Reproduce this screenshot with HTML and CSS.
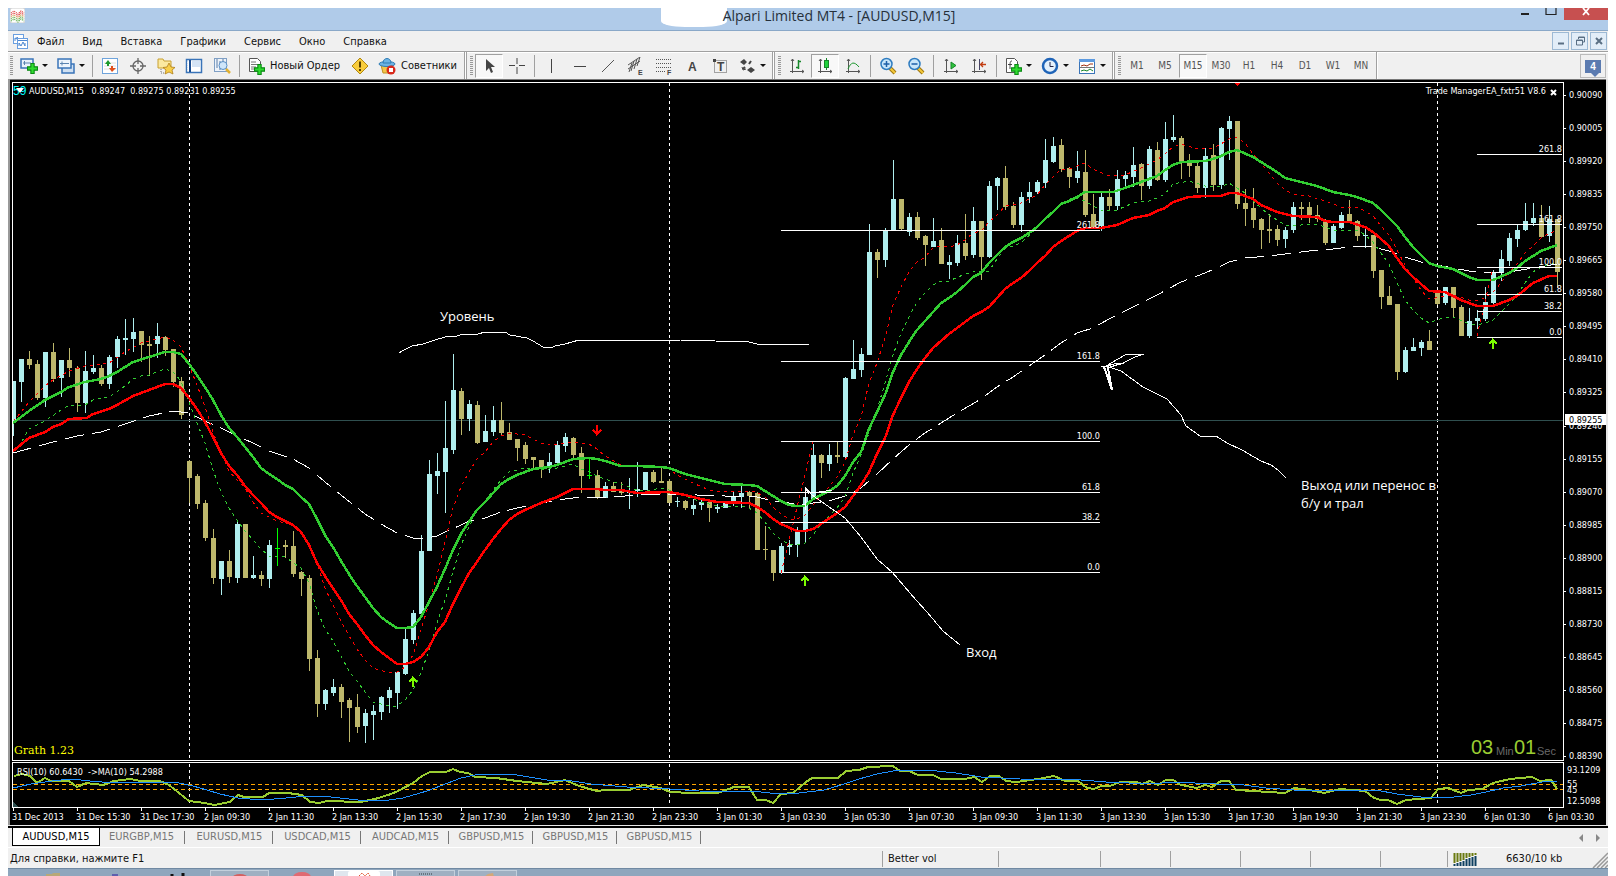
FILE: index.html
```html
<!DOCTYPE html>
<html lang="ru">
<head>
<meta charset="utf-8">
<title>Alpari Limited MT4 - [AUDUSD,M15]</title>
<link rel="stylesheet" href="styles.css">
</head>
<body>
<svg class="defs" aria-hidden="true">
  <symbol id="plus" viewBox="0 0 10 10"><path d="M3.500.5h3v3h3v3h-3v3h-3v-3h-3v-3h3z" fill="#2fdc2f" stroke="#0a8a14"/></symbol>
  <symbol id="axes" viewBox="0 0 18 18"><path d="M4.500 2v14M2 14.500h14M3 4l1.500-2L6 4M14 13l2 1.500-2 1.500" fill="none" stroke="#555"/></symbol>
  <symbol id="lens" viewBox="0 0 18 18"><path d="M11 11l5 5" stroke="#a07810" stroke-width="4"/><path d="M11 11l5 5" stroke="#f4c93c" stroke-width="2"/><circle cx="7.500" cy="7" r="5.500" fill="#c8e6fa" stroke="#2e7cc0" stroke-width="1.500"/></symbol>
</svg>

<header class="titlebar">
  <svg class="app-icon" viewBox="0 0 15 15" aria-hidden="true"><rect width="15" height="15" rx="2" fill="#fff" stroke="#ccc"/><g fill="none" stroke-dasharray="1 1" stroke-width="1.300"><path d="M1 5l3-2 4 3 3-3 3 2M1 7l3-2 4 3 3-3 3 2" stroke="#e04040"/><path d="M1 9l3-2 4 3 3-3 3 2" stroke="#d0a050"/><path d="M1 11l3-2 4 3 3-3 3 2M1 13l3-2 4 3 3-3 3 2" stroke="#5fae50"/></g></svg>
  <div class="caption"><span class="smudge"></span><h1>Alpari Limited MT4 - [AUDUSD,M15]</h1></div>
  <div class="window-buttons">
    <button class="win" aria-label="Свернуть"><svg viewBox="0 0 12 12"><path d="M2 6h8" stroke="#222" stroke-width="2"/></svg></button>
    <button class="win" aria-label="Развернуть"><svg viewBox="0 0 12 12"><path d="M1 0v6.500h10V0" fill="none" stroke="#222" stroke-width="1.200"/></svg></button>
    <button class="win close" aria-label="Закрыть"><svg viewBox="0 0 12 12"><path d="M3 0l6 7M9 0L3 7" stroke="#fff" stroke-width="1.800"/></svg></button>
  </div>
</header>

<nav class="menubar">
  <svg class="doc-icon" viewBox="0 0 15 15" aria-hidden="true"><rect x=".5" y=".5" width="10" height="9" fill="#fff" stroke="#6a9fe0"/><path d="M2 7V4l2 1V3l2 3" fill="none" stroke="#4a86d0"/><rect x="4.500" y="4.500" width="10" height="10" fill="#fff" stroke="#6a9fe0"/><path d="M5 6.500h9M6 12V9l2 3 2-4 2 4V9" fill="none" stroke="#4a86d0"/></svg>
  <button>Файл</button><button>Вид</button><button>Вставка</button><button>Графики</button><button>Сервис</button><button>Окно</button><button>Справка</button>
  <div class="mdi">
    <button aria-label="Свернуть окно"><svg viewBox="0 0 12 12"><path d="M3 8.500h6" stroke="#5a6f84" stroke-width="2"/></svg></button>
    <button aria-label="Восстановить окно"><svg viewBox="0 0 12 12"><path d="M4.500 4V2h6v5h-2M2.500 5h6v5h-6zM2 5.500h7M4 2.500h7" fill="none" stroke="#5a6f84"/></svg></button>
    <button aria-label="Закрыть окно"><svg viewBox="0 0 12 12"><path d="M3 3l6 6M9 3L3 9" stroke="#5a6f84" stroke-width="2"/></svg></button>
  </div>
</nav>

<div class="toolbar">
  <div class="group">
    <i class="grip"></i>
    <button class="tool drop" aria-label="Новый график"><svg viewBox="0 0 18 18"><rect x="1" y="2" width="12" height="9" fill="#e8f2fc" stroke="#3a74b8" stroke-width="1.500"/><path d="M3 6h8M4.500 4v4" stroke="#5a84b0" fill="none"/><use href="#plus" x="7" y="6" width="11" height="11"/></svg><b></b></button>
    <button class="tool drop" aria-label="Профили"><svg viewBox="0 0 18 18"><rect x="5" y="7" width="12" height="9" fill="#cfe0f2" stroke="#3a74b8" stroke-width="1.500"/><rect x="1" y="2" width="13" height="9" fill="#eef5fc" stroke="#3a74b8" stroke-width="1.500"/><path d="M3 6.500h9M5 4.500v4" stroke="#5a84b0" fill="none"/></svg><b></b></button>
    <i class="sep"></i>
    <button class="tool" aria-label="Обзор рынка"><svg viewBox="0 0 18 18"><rect x="1.500" y="1.500" width="15" height="15" fill="#fff" stroke="#6fa4dc"/><path d="M3 6h12M3 9h12M3 12h12" stroke="#e0e0e0"/><path d="M7 3l3 4H8v2H6V7H4z" fill="#1c9a2c"/><path d="M11 15l-3-4h2V9h2v2h3z" fill="#e0501c"/></svg></button>
    <button class="tool" aria-label="Окно данных"><svg viewBox="0 0 18 18"><circle cx="9" cy="9" r="5" fill="none" stroke="#666" stroke-width="1.300"/><path d="M9 1v6M9 11v6M1 9h6M11 9h6" stroke="#666" stroke-width="1.300"/></svg></button>
    <button class="tool" aria-label="Навигатор"><svg viewBox="0 0 18 18"><path d="M1 11V2h5l1 2h7v7z" fill="#fbe9a0" stroke="#c8a030"/><path d="M4 12v4h4" stroke="#777" stroke-dasharray="1 1" fill="none"/><path d="M12 6l2 4 4 .5-3 2.500 1 4-4-2-4 2 1-4-3-2.500 4-.5z" fill="#f8cf4a" stroke="#b07f18" stroke-width=".8"/></svg></button>
    <button class="tool" aria-label="Терминал"><svg viewBox="0 0 18 18"><rect x="1.500" y="2.500" width="15" height="13" fill="#fff" stroke="#3a74b8" stroke-width="1.500"/><path d="M5 3v12" stroke="#1d4f92" stroke-width="2"/><path d="M7 5h8M7 7h8M7 9h8" stroke="#a9c8ec"/><path d="M3 5v9" stroke="#fff" stroke-dasharray="1 1"/></svg></button>
    <button class="tool" aria-label="Тестер стратегий"><svg viewBox="0 0 18 18"><rect x="1.500" y="1.500" width="12" height="13" fill="#eef3fa" stroke="#7f9fc4"/><path d="M4 2v9M7 4v9M10 2v6" stroke="#5a7ea8"/><circle cx="10" cy="8.500" r="4" fill="#cfe6fa" stroke="#5a8fc4"/><path d="M13 12l4 4" stroke="#e0b030" stroke-width="2.500"/></svg></button>
    <i class="sep"></i>
    <button class="labelled"><svg viewBox="0 0 18 18"><path d="M2.500 1.500h8l3 3v10h-11z" fill="#fff" stroke="#555"/><path d="M4 5h5M4 7.500h7M4 10h5M4 12h3" stroke="#777"/><use href="#plus" x="7" y="7" width="11" height="11"/></svg>Новый Ордер</button>
    <button class="tool" aria-label="MetaEditor"><svg viewBox="0 0 18 18"><path d="M9 1l8 8-8 8-8-8z" fill="#f8cc3c" stroke="#b08812"/><path d="M9 4.500v6M9 12v2" stroke="#5a4200" stroke-width="2"/></svg></button>
    <button class="labelled"><svg viewBox="0 0 18 18"><path d="M3 8l2 8h7l3-8z" fill="#f3c64a" stroke="#c09020"/><ellipse cx="9" cy="7" rx="8" ry="2.500" fill="#6db4e4" stroke="#2f7cb4"/><path d="M5 6c0-6 8-6 8 0z" fill="#6db4e4" stroke="#2f7cb4"/><circle cx="13" cy="13" r="4.500" fill="#d82a1c"/><rect x="11" y="11" width="4" height="4" fill="#fff"/></svg>Советники</button>
  </div>
  <div class="group">
    <i class="grip"></i>
    <button class="tool pressed" aria-label="Курсор"><svg viewBox="0 0 18 18"><path d="M6 2v12l3-3 2 5 2-1-2-5h4z" fill="#444"/></svg></button>
    <button class="tool" aria-label="Перекрестие"><svg viewBox="0 0 18 18"><path d="M9 1v6M9 10v7M1 8.500h6M11 8.500h6" stroke="#444"/></svg></button>
    <i class="sep"></i>
    <button class="tool" aria-label="Вертикальная линия"><svg viewBox="0 0 18 18"><path d="M8.500 2v14" stroke="#444"/></svg></button>
    <button class="tool" aria-label="Горизонтальная линия"><svg viewBox="0 0 18 18"><path d="M3 9.500h12" stroke="#444"/></svg></button>
    <button class="tool" aria-label="Трендовая линия"><svg viewBox="0 0 18 18"><path d="M3 15L15 3" stroke="#555"/></svg></button>
    <button class="tool" aria-label="Канал"><svg viewBox="0 0 18 18"><path d="M1 12L13 4M1 8l12-8M4 14l3-10M7 12l3-10M10 9l3-9M2 15l3-9" stroke="#555"/><text x="11" y="18" class="glyph">E</text></svg></button>
    <button class="tool" aria-label="Фибоначчи"><svg viewBox="0 0 18 18"><path d="M1 2.500h15M1 6.500h15M1 10.500h15M1 14.500h9" stroke="#555" stroke-dasharray="1 1"/><text x="12" y="18" class="glyph">F</text></svg></button>
    <button class="tool" aria-label="Текст"><svg viewBox="0 0 18 18"><text x="5" y="14" class="glyph big">A</text></svg></button>
    <button class="tool" aria-label="Метка"><svg viewBox="0 0 18 18"><rect x="3.500" y="3.500" width="12" height="12" fill="none" stroke="#555" stroke-dasharray="1 1"/><path d="M2 2h3v3H2z" fill="#444"/><text x="6" y="14" class="glyph big">T</text></svg></button>
    <button class="tool drop" aria-label="Стрелки"><svg viewBox="0 0 18 18"><path d="M2 5l4-3 3 3-3 3zM9 13l4-3 4 3-4 3z" fill="#444"/><path d="M5 12l2-2M11 7l2-3" stroke="#444" stroke-width="2"/><path d="M4 10l1 3 3-1" fill="none" stroke="#444"/></svg><b></b></button>
  </div>
  <div class="group">
    <i class="grip"></i>
    <button class="tool" aria-label="Бары"><svg viewBox="0 0 18 18"><use href="#axes"/><path d="M10.500 3v9M8 10.500h2M11 4.500h2" stroke="#17862a" stroke-width="1.500"/></svg></button>
    <button class="tool pressed" aria-label="Свечи"><svg viewBox="0 0 18 18"><use href="#axes"/><path d="M10.500 1v12" stroke="#17862a"/><rect x="8.500" y="3.500" width="4" height="7" fill="#1fd23a" stroke="#17862a"/></svg></button>
    <button class="tool" aria-label="Линия"><svg viewBox="0 0 18 18"><use href="#axes"/><path d="M4 12c3-7 6-8 11-2" fill="none" stroke="#17962a"/></svg></button>
    <i class="sep"></i>
    <button class="tool" aria-label="Увеличить"><svg viewBox="0 0 18 18"><use href="#lens"/><path d="M4.500 7h6M7.500 4v6" stroke="#1d5fa8" stroke-width="1.500"/></svg></button>
    <button class="tool" aria-label="Уменьшить"><svg viewBox="0 0 18 18"><use href="#lens"/><path d="M4.500 7h6" stroke="#1d5fa8" stroke-width="1.500"/></svg></button>
    <i class="sep"></i>
    <button class="tool" aria-label="Автопрокрутка"><svg viewBox="0 0 18 18"><use href="#axes"/><path d="M9 5l5 3.500L9 12z" fill="#2fc23c" stroke="#17862a"/></svg></button>
    <button class="tool" aria-label="Сдвиг графика"><svg viewBox="0 0 18 18"><use href="#axes"/><path d="M9.500 2v11" stroke="#446"/><path d="M16 7.500h-5M13 5l-2.500 2.500L13 10" fill="none" stroke="#c23c10" stroke-width="1.300"/></svg></button>
    <i class="sep"></i>
    <button class="tool drop" aria-label="Индикаторы"><svg viewBox="0 0 18 18"><path d="M2.500 1.500h8l3 3v11h-11z" fill="#fff" stroke="#555"/><path d="M8 4c-2 0-2 1-2 8M4 7.500h4" fill="none" stroke="#444"/><use href="#plus" x="7" y="7" width="11" height="11"/></svg><b></b></button>
    <button class="tool drop" aria-label="Периоды"><svg viewBox="0 0 18 18"><circle cx="9" cy="9" r="7" fill="#e4f1fc" stroke="#1f64b8" stroke-width="2.500"/><path d="M9 5v4.500h3.500" fill="none" stroke="#224"/></svg><b></b></button>
    <button class="tool drop" aria-label="Шаблоны"><svg viewBox="0 0 18 18"><rect x="1.500" y="2.500" width="15" height="14" fill="#fff" stroke="#3a74b8"/><rect x="1" y="2" width="16" height="3" fill="#5c9ae0"/><path d="M3 9l3-1 3 1 3-2h3" fill="none" stroke="#a03010"/><path d="M2 10.500h14" stroke="#777"/><path d="M3 14l3-1 3 1 3-2 3 2" fill="none" stroke="#17862a"/></svg><b></b></button>
  </div>
  <div class="group frames">
    <i class="grip"></i>
    <button class="tool">M1</button><button class="tool">M5</button><button class="tool pressed">M15</button><button class="tool">M30</button><button class="tool">H1</button><button class="tool">H4</button><button class="tool">D1</button><button class="tool">W1</button><button class="tool">MN</button>
  </div>
  <button class="messages" aria-label="Сообщения: 4"><span>4</span></button>
</div>

<main class="chart-window">
  <svg id="chart" class="chart" viewBox="8 79 1600 747" role="img" aria-label="AUDUSD,M15">
    <rect x="8" y="79" width="1600" height="747" fill="#e6e6e6"/>
    <rect x="8" y="79" width="1598" height="2" fill="#777"/>
    <rect x="8" y="79" width="2" height="746" fill="#999"/>
    <rect x="10" y="80" width="1596" height="745" fill="#000"/>
    <g id="plot" shape-rendering="crispEdges"></g>
    <g id="labels"></g>
  </svg>
</main>

<div class="tabs">
  <button class="tab active">AUDUSD,M15</button><button class="tab">EURGBP,M15</button><button class="tab">EURUSD,M15</button><button class="tab">USDCAD,M15</button><button class="tab">AUDCAD,M15</button><button class="tab">GBPUSD,M15</button><button class="tab">GBPUSD,M15</button><button class="tab">GBPUSD,M15</button>
  <div class="scrollers"><button class="arrow left" aria-label="Влево"></button><button class="arrow right" aria-label="Вправо"></button></div>
</div>

<footer class="statusbar">
  <span class="help">Для справки, нажмите F1</span>
  <span class="cell profile">Better vol</span>
  <span class="cell medium"></span><span class="cell"></span><span class="cell"></span><span class="cell"></span><span class="cell"></span><span class="cell narrow"></span>
  <span class="cell traffic"><svg viewBox="0 0 24 13" aria-hidden="true"><path d="M1.500 0v10M4.500 0v9M7.500 0v8M10.500 0v7M13.500 0v5M16.500 0v4M19.500 0v3M22.500 0v2" stroke="#6a7a10" stroke-width="2"/><path d="M1.500 11v2M4.500 10v3M7.500 9v4M10.500 8v5M13.500 6v7M16.500 5v8M19.500 4v9M22.500 3v10" stroke="#0e4060" stroke-width="2"/></svg>6630/10 kb</span>
  <svg class="corner" viewBox="0 0 16 16" aria-hidden="true"><path d="M1 16L16 1M5 16L16 5M9 16l7-7M13 16l3-3" stroke="#999" stroke-width="1.500"/></svg>
</footer>

<div class="taskbar">
  <span class="task"><svg viewBox="0 0 20 6"><path d="M2 6V4h6l1-1h7v3z" fill="#b8a878"/></svg></span>
  <span class="task"><svg viewBox="0 0 20 6"><path d="M6 4h6v2H6z" fill="#5f5fae"/></svg></span>
  <span class="task"><svg viewBox="0 0 20 6"><path d="M4 4v2M15 3v3" stroke="#111" stroke-width="3"/></svg></span>
  <span class="task open"><svg viewBox="0 0 20 6"><ellipse cx="10" cy="7" rx="8" ry="4" fill="#d45f5f"/></svg></span>
  <span class="task"><svg viewBox="0 0 20 6"><ellipse cx="10" cy="7" rx="9" ry="5" fill="#e06a72"/></svg></span>
  <span class="task open front"><svg viewBox="0 0 32 6"><rect width="32" height="8" rx="2" fill="#fff"/><path d="M11 5l3-3 3 3 3-3 2 3" fill="none" stroke="#e0502c" stroke-dasharray="2 1"/></svg></span>
  <span class="task open"><svg viewBox="0 0 20 6"><path d="M3 3h14" stroke="#66757f" stroke-width="2" stroke-dasharray="1 1"/></svg></span>
  <span class="task open"><svg viewBox="0 0 20 6"><path d="M6 6l4-3 5-1 1 4z" fill="#d4a878"/></svg></span>
</div>
<script src="chart.js"></script>
</body>
</html>
```

FILE: styles.css
```css
* { box-sizing: border-box; }
body {
  margin: 0;
  padding: 8px 8px 0;
  background: #fff;
  color: #111;
  font: 11px/14px "DejaVu Sans Condensed", "DejaVu Sans", sans-serif;
}
button {
  margin: 0;
  padding: 0;
  border: 0;
  background: none;
  color: inherit;
  font: inherit;
}
svg { display: block; }
.defs { position: absolute; width: 0; height: 0; }

.titlebar {
  display: grid;
  grid-template-columns: 1fr auto 1fr;
  height: 23px;
  background: #b0cbe9;
  border-bottom: 1px solid #8aa8c8;
}
.app-icon { width: 15px; height: 15px; margin-left: 2px; }
.caption { display: flex; }
.smudge {
  width: 66px;
  height: 19px;
  margin-right: -4px;
  background: #fff;
  border-radius: 0 0 24px 24px / 0 0 6px 6px;
}
.caption h1 {
  margin: 0;
  color: #26303a;
  font: 14px/16px "Open Sans", "Noto Sans", sans-serif;
}
.window-buttons { display: flex; justify-content: flex-end; align-items: flex-start; }
.win { display: flex; justify-content: center; width: 26px; height: 12px; }
.win svg { width: 12px; height: 12px; }
.win.close { width: 44px; background: #c75050; }

.menubar {
  display: flex;
  align-items: center;
  height: 20px;
  padding-left: 5px;
  background: #f0f0f0;
}
.doc-icon { width: 15px; height: 15px; }
.menubar > button { padding: 1px 9px 0; }
.mdi { display: flex; gap: 2px; margin-left: auto; padding-right: 1px; }
.mdi button {
  display: grid;
  place-items: center;
  width: 17px;
  height: 18px;
  background: #e2edf8;
  border: 1px solid #9db9d4;
}
.mdi svg { width: 12px; height: 12px; }

.toolbar {
  display: flex;
  height: 28px;
  background: #f0f0f0;
  border-top: 1px solid #a0a0a0;
  box-shadow: inset 0 1px #fff;
}
.group {
  display: flex;
  align-items: center;
  padding: 0 1px 0 2px;
  border-right: 1px solid #a0a0a0;
  box-shadow: 1px 0 #fff, 2px 0 #a0a0a0;
  margin-right: 3px;
}
.group.frames { box-shadow: 1px 0 #fff; }
.grip {
  width: 3px;
  height: 20px;
  margin-right: 2px;
  background: repeating-linear-gradient(#999 0 1px, #f0f0f0 1px 2px);
}
.sep { width: 1px; height: 22px; margin: 0 3px; background: #a0a0a0; }
.tool {
  display: flex;
  align-items: center;
  justify-content: center;
  width: 28px;
  height: 24px;
}
.tool svg, .labelled svg { width: 18px; height: 18px; }
.tool.drop { width: 37px; gap: 4px; }
.tool b {
  border: 3px solid transparent;
  border-top-color: #111;
  border-bottom: 0;
}
.tool.pressed {
  background: #f8f8f8;
  border: 1px solid #fff;
  border-top-color: #a0a0a0;
  border-left-color: #a0a0a0;
}
.labelled { display: flex; align-items: center; gap: 5px; padding: 0 6px 0 4px; }
.frames .tool { color: #555; font-size: 10px; }
.glyph { fill: #444; font: bold 7px "Liberation Sans", sans-serif; }
.glyph.big { font-size: 12px; }
.messages {
  display: grid;
  place-items: center;
  width: 26px;
  height: 24px;
  margin: 2px 2px 0 auto;
  border: 1px solid #bbb;
}
.messages span {
  position: relative;
  width: 16px;
  height: 13px;
  background: #5b7bb0;
  color: #fff;
  font: bold 10px/13px "Liberation Sans", sans-serif;
}
.messages span::after {
  content: "";
  position: absolute;
  top: 13px;
  left: 6px;
  border: 4px solid transparent;
  border-top-color: #5b7bb0;
  border-bottom: 0;
}

.chart { width: 100%; height: auto; }
.price, .time { fill: #fff; font-size: 9px; }
.price.end { text-anchor: end; }
.price.dark { fill: #000; }
.note { fill: #fff; font: 13px "Open Sans", "Noto Sans", sans-serif; }
.signature { fill: #ff0; font: 11px "DejaVu Serif", serif; }
.clock { fill: #9acd32; font: 20px "Liberation Sans", sans-serif; }
.unit { fill: #696969; font: 11px "Liberation Sans", sans-serif; }
.cyan { fill: #0ff; font: 12px "Liberation Sans", sans-serif; }

.tabs {
  display: flex;
  height: 22px;
  padding-left: 4px;
  background: #f0f0f0;
  border-top: 2px solid #000;
  border-bottom: 1px solid #fff;
}
.tab {
  position: relative;
  width: 88px;
  height: 18px;
  padding-right: 5px;
  color: #777;
}
.tab:nth-child(n+6) { width: 84px; }
.tab:not(.active)::after {
  content: "";
  position: absolute;
  top: 3px;
  right: 3px;
  width: 1px;
  height: 13px;
  background: #777;
}
.tab.active {
  padding: 0;
  background: #fff;
  color: #000;
  border: solid #000;
  border-width: 0 1px 1px;
}
.scrollers { display: flex; align-items: center; gap: 13px; margin: 0 8px 0 auto; }
.arrow { border: 4px solid transparent; }
.arrow.left { border-right-color: #888; border-left: 0; }
.arrow.right { border-left-color: #888; border-right: 0; }

.statusbar {
  display: flex;
  align-items: center;
  height: 20px;
  padding-top: 2px;
  background: #f0f0f0;
}
.help { flex: 1; padding-left: 2px; }
.cell { width: 70px; height: 16px; border-left: 1px solid #a0a0a0; }
.profile { width: 116px; padding: 1px 5px; }
.medium { width: 102px; }
.narrow { width: 67px; }
.traffic { display: flex; align-items: center; gap: 29px; width: 145px; padding-left: 5px; }
.traffic svg { width: 24px; height: 13px; }
.corner { width: 16px; height: 16px; align-self: flex-end; }

.taskbar {
  display: flex;
  gap: 3px;
  height: 8px;
  padding: 1px 0 0 16px;
  background: #8fa6bd;
  border-top: 1px solid #7089a2;
  overflow: hidden;
}
.task { display: flex; justify-content: center; width: 59px; height: 7px; }
.task svg { height: 6px; }
.task.open { background: #9fb0c2; border: 1px solid #c3d0dc; border-bottom: 0; }
.task.front { background: #dfe6ee; border-color: #fff; }
```

FILE: chart.js
```js
const NS = 'http://www.w3.org/2000/svg';
const plot = document.getElementById('plot');
const labels = document.getElementById('labels');

function add(parent, name, attrs, text) {
  const node = document.createElementNS(NS, name);
  for (const key in attrs) node.setAttribute(key, attrs[key]);
  if (text) node.textContent = text;
  parent.appendChild(node);
  return node;
}
const rect = (x, y, width, height, fill) => add(plot, 'rect', { x, y, width, height, fill });
const line = (points, stroke, width = 1, dash = '') =>
  add(plot, 'polyline', { points, fill: 'none', stroke, 'stroke-width': width, 'stroke-dasharray': dash });
const label = (x, y, text, cls = 'price') => add(labels, 'text', { x, y, class: cls }, text);

// Bars: kind (u = up, d = down, g = doji), high, body top, body bottom, low
const bars = `u381,381,422,436 u359,359,382,402 d351,359,365,369 d360,364,398,400 u352,352,398,407 d343,352,379,382 u360,360,378,397 d348,360,368,377 d366,368,403,412 u351,371,403,413
u355,368,372,374 d365,368,384,386 u355,357,384,389 u336,339,357,368 u319,338,340,355 u318,332,339,352 d331,331,345,362 d336,344,346,376 u323,336,344,358 d336,337,350,356
d349,349,382,387 d377,381,415,419 d460,461,478,503 d474,476,504,509 d500,503,538,541 d529,538,578,584 u561,561,579,595 d550,561,577,583 u522,524,578,583 d524,524,578,578
u556,575,578,579 d571,575,579,586 u540,545,579,588 g528,548,549,566 d540,545,547,558 d531,546,574,577 d571,572,579,596 d575,578,659,671 d650,658,704,717 u689,690,704,710
u679,687,693,696 d684,687,702,718 d698,700,708,742 d694,707,727,733 u709,713,726,743 u705,711,715,740 u696,697,712,720 u687,690,698,713 u671,672,693,709 u629,639,674,675
u610,613,640,644 u535,551,614,614 u460,474,551,551 u453,471,476,494 u401,448,472,513 u354,390,450,454 d388,391,419,435 u400,404,419,431 d401,405,443,444 u415,431,442,442
u406,420,432,436 d402,420,433,435 d423,432,440,440 d439,439,448,461 d442,445,459,464 d457,457,460,470 d460,460,467,478 u453,462,467,473 u441,445,463,463 u433,437,446,452
d437,438,455,459 d447,453,476,493 g458,475,476,479 d470,475,498,499 u482,486,498,498 d482,486,492,492 d482,491,493,495 u478,492,493,509 u462,489,491,497 u472,472,490,490
d470,472,482,483 d468,481,483,483 d479,481,503,503 u497,501,502,507 d500,501,508,510 u499,505,509,515 u500,502,505,510 d502,502,508,522 u504,507,509,513 u501,502,508,508
u491,496,502,506 u483,493,497,508 d491,492,496,509 d492,493,550,550 d526,549,550,560 d550,550,573,581 u543,546,573,574 u540,545,547,555 u527,531,545,557 u488,497,531,542
u444,455,499,499 d454,455,463,478 u444,455,464,471 d442,455,457,463 u377,378,457,459 u340,369,379,379 u348,354,370,377 u224,252,355,355 d249,252,260,278 u228,231,260,267
u160,199,230,230 d199,199,229,230 u213,217,232,236 d212,217,238,240 d235,236,245,266 u218,241,247,247 d228,240,264,264 u255,262,265,279 u235,243,263,266 d214,243,256,260
u207,221,255,258 d221,221,257,280 u181,186,257,258 u177,178,186,210 d166,178,207,210 d202,206,225,228 u192,197,225,232 u182,192,197,203 u180,182,192,194 u139,160,183,188
u137,146,162,163 d139,145,169,172 d167,168,177,188 u151,171,178,183 d150,172,215,217 d194,214,228,228 u193,197,226,231 d189,197,206,210 u170,179,206,210 u171,175,179,188
u147,165,177,187 d163,164,186,200 u146,149,186,189 d142,150,180,181 u122,139,180,182 u115,137,140,142 d136,138,161,179 d154,160,166,177 d160,166,188,193 u148,156,188,198
d144,155,185,191 u127,128,185,189 u116,121,129,160 d121,121,204,209 d189,203,209,226 d188,208,220,228 d218,219,230,249 d214,229,231,243 d225,229,240,246 u227,230,239,248
u202,207,230,233 d202,207,209,220 d202,207,215,223 d205,215,219,222 d219,220,243,245 u224,226,243,243 u212,215,228,229 d200,214,221,221 d220,221,236,241 u228,235,236,248
d235,235,271,278 d270,270,297,309 d286,296,305,305 d304,304,372,380 u347,350,372,373 u338,347,351,351 u340,342,348,356 d330,341,350,350 d293,293,304,305 u287,287,303,305
d287,287,308,318 d305,307,336,336 u308,321,336,338 u310,318,321,329 u287,302,319,321 u270,272,303,305 u250,259,273,281 u233,238,261,266 u225,230,239,247 u203,221,230,231
u203,218,223,226 d205,218,237,238 u206,219,236,242 d219,219,272,288`.split(/\s+/);

// Session separators and the current price
for (const x of [189, 669, 1437]) {
  for (let y = 83; y < 760; y += 6) rect(x, y, 1, 3, '#fff');
  for (let y = 764; y < 806; y += 6) rect(x, y, 1, 3, '#fff');
}
rect(13, 420, 1550, 1, '#2f4f4f');

const colours = { u: '#afeeee', d: '#bdb76b', g: '#00ff00' };
bars.forEach((bar, i) => {
  const [high, top, bottom, low] = bar.slice(1).split(',').map(Number);
  const fill = colours[bar[0]];
  const x = 13 + i * 8;
  rect(x, high, 1, Math.max(low - high, 1), fill);
  rect(i ? x - 2 : x, top, i ? 5 : 3, Math.max(bottom - top, 1), fill);
});

// Moving averages
line('13,453 53,442 77,436 101,432 125,424 149,416 173,411 189,413 205,421 221,428 233,434 253,443 269,451 293,459 309,468 325,482 341,495 365,514 381,524 397,533 413,538 421,539 437,536 445,532 461,525 469,521 485,518 501,512 517,508 533,505 557,500 573,498 613,497 637,495 669,494 725,496 757,497 773,501 797,504 805,504 829,501 845,496 861,488 877,474 893,459 909,445 925,433 941,423 957,413 981,399 997,387 1013,377 1029,366 1045,355 1061,343 1077,333 1093,328 1109,319 1133,307 1157,295 1181,282 1205,273 1221,266 1229,262 1245,258 1269,256 1293,253 1309,251 1333,249 1357,246 1373,247 1389,251 1405,257 1421,262 1437,265 1453,268 1469,271 1485,273 1509,272 1533,268 1557,264', '#fff', 1, '19 8');
line('13,452 21,443 29,429 45,421 61,410 69,405 85,405 93,400 109,397 125,386 133,379 141,376 149,375 165,369 173,372 181,381 189,402 197,423 205,443 213,470 221,492 229,508 237,520 245,531 261,549 269,556 285,557 301,568 309,583 317,610 325,629 333,641 341,656 349,671 357,681 365,692 373,702 389,706 397,706 405,700 413,690 421,673 429,650 437,623 445,600 453,572 461,545 469,527 477,510 485,502 493,490 501,480 509,472 525,468 541,470 557,468 573,464 581,469 589,472 597,476 613,482 621,484 637,490 645,491 661,488 669,490 685,496 701,502 717,506 741,506 749,508 757,513 765,522 773,533 781,540 789,544 797,545 805,543 813,535 821,524 837,508 845,497 853,473 861,455 869,433 877,410 885,383 893,355 901,333 909,317 917,302 925,293 933,285 941,281 949,281 965,274 973,272 989,271 997,259 1005,249 1021,243 1037,228 1053,212 1061,205 1073,197 1085,201 1093,206 1101,210 1117,210 1133,203 1149,201 1157,198 1165,194 1173,184 1189,181 1205,186 1221,187 1229,183 1245,193 1253,201 1261,208 1269,215 1285,225 1293,226 1309,224 1317,224 1333,230 1357,230 1365,235 1373,242 1381,253 1389,264 1397,283 1405,300 1413,310 1421,318 1429,323 1445,317 1453,317 1469,324 1477,325 1485,323 1493,320 1501,312 1509,304 1517,295 1525,283 1533,272 1541,267 1557,262', '#32cd32', 1, '3 4');
line('13,422 29,402 45,386 53,380 69,371 85,366 109,363 125,352 141,343 157,339 165,337 173,340 181,347 189,365 197,385 205,407 213,432 221,453 229,471 237,480 245,488 253,502 261,513 277,521 293,525 301,532 309,545 317,563 325,588 333,605 341,621 349,636 357,649 365,660 373,668 389,673 397,672 405,667 413,655 421,630 429,603 437,575 445,542 453,508 461,487 469,472 477,459 485,452 493,442 501,436 509,433 525,435 533,439 541,443 549,445 557,444 573,442 589,444 597,449 605,456 621,465 637,466 661,467 669,469 677,475 693,483 709,490 725,492 749,491 757,492 765,497 773,507 781,514 789,519 797,519 805,515 813,505 829,487 837,477 845,462 853,435 861,417 869,383 877,363 885,338 893,305 901,287 909,272 917,262 925,257 933,248 941,246 949,247 957,245 965,240 973,233 981,231 989,222 997,215 1005,206 1021,203 1037,195 1045,185 1053,177 1061,169 1069,169 1085,163 1093,169 1109,176 1125,175 1141,168 1157,160 1165,154 1173,147 1181,144 1197,149 1213,148 1221,144 1229,139 1237,137 1245,143 1253,154 1261,163 1269,173 1277,183 1285,190 1293,194 1309,196 1325,201 1341,207 1357,207 1365,211 1373,216 1381,226 1389,235 1397,250 1405,265 1413,278 1421,290 1429,299 1453,295 1469,300 1477,301 1485,298 1493,292 1501,283 1509,272 1517,264 1525,253 1533,246 1541,238 1549,233 1557,231', '#f00', 1, '3 4');
line('13,423 29,411 45,400 61,392 69,387 85,382 101,379 109,376 117,372 133,362 149,357 165,352 173,352 181,354 189,364 197,375 205,387 213,400 221,415 229,428 237,437 245,447 253,457 261,468 269,474 277,479 285,485 293,489 301,497 309,504 317,519 325,535 333,547 341,561 349,574 357,586 365,597 373,608 381,617 389,623 397,628 405,628 413,627 421,617 429,602 437,587 445,569 453,550 461,534 469,522 477,510 485,502 493,493 501,484 509,479 517,475 525,472 533,469 549,467 557,465 565,462 573,459 589,458 597,459 605,461 621,466 637,466 661,467 669,468 685,474 701,478 725,484 749,485 757,486 765,491 773,496 781,501 789,505 797,506 805,506 813,499 829,491 837,486 845,476 853,462 861,452 869,429 877,412 885,395 893,372 901,355 909,342 917,330 925,321 933,312 941,303 949,298 957,292 965,285 973,277 981,273 989,263 997,255 1005,247 1013,242 1021,238 1029,233 1037,227 1045,219 1053,212 1061,204 1069,201 1077,197 1085,192 1113,192 1125,188 1133,185 1141,182 1149,179 1157,176 1165,170 1173,165 1181,162 1205,161 1213,159 1221,156 1229,152 1237,150 1253,157 1261,162 1277,172 1285,178 1301,182 1317,186 1333,192 1349,195 1357,197 1373,203 1381,210 1397,226 1405,237 1413,247 1421,255 1429,263 1437,266 1453,269 1469,277 1477,280 1493,280 1509,273 1517,268 1525,261 1541,251 1557,245', '#32cd32', 2.5);
line('13,451 29,438 45,432 53,427 61,424 69,419 87,418 93,414 109,409 117,405 133,396 149,390 165,384 173,384 181,388 189,398 197,409 205,422 213,437 221,453 229,466 237,475 245,486 253,495 261,503 269,512 277,517 293,525 301,532 309,545 317,563 325,576 333,588 341,600 349,614 357,624 365,635 373,645 381,652 389,658 397,664 405,664 413,662 421,657 429,647 437,632 445,622 453,604 461,588 469,573 477,562 485,550 493,539 501,529 509,520 517,514 525,510 541,503 557,497 573,489 597,489 605,490 621,490 637,493 669,492 685,495 701,499 717,502 749,503 757,507 765,512 773,519 781,524 797,531 805,531 813,529 821,524 837,513 845,507 853,496 861,485 869,472 877,454 885,438 893,415 901,398 909,382 917,369 925,358 933,348 941,341 949,334 957,328 965,322 973,316 981,312 989,307 997,298 1005,289 1013,283 1021,278 1029,271 1037,263 1045,256 1053,247 1061,241 1077,231 1085,228 1101,228 1117,225 1133,218 1149,215 1157,211 1165,208 1173,202 1189,197 1205,196 1221,196 1229,193 1237,193 1253,199 1261,205 1277,212 1293,216 1317,217 1325,221 1333,222 1349,222 1365,227 1373,232 1381,239 1389,246 1397,258 1405,269 1413,277 1421,284 1429,291 1445,292 1461,300 1477,306 1493,306 1509,300 1517,296 1533,283 1549,276 1557,276', '#f00', 2.5);

// Fibonacci levels
const levels = ['261.8', '161.8', '100.0', '61.8', '38.2', '0.0'];
function fibo(left, right, rows) {
  rows.forEach((y, i) => {
    rect(left, y, right - left, 1, '#fff');
    label(right, y - 2, levels[i], 'price end');
  });
}
fibo(781, 1100, [230, 361, 441, 492, 522, 572]);
fibo(1477, 1562, [154, 224, 267, 294, 311, 337]);
line('781,573 813,442', '#f00', 1, '3 4');
line('1477,336 1493,268', '#f00', 1, '3 4');

// Signal arrows
const arrow = (x, y, dir, colour) =>
  line(`${x - 4},${y} ${x},${y - 4 * dir} ${x + 4},${y} ${x},${y - 4 * dir} ${x},${y + 5 * dir}`, colour, 2);
arrow(413, 682, 1, '#7cfc00');
arrow(805, 581, 1, '#7cfc00');
arrow(1493, 344, 1, '#7cfc00');
arrow(597, 430, -1, '#f00');
add(plot, 'path', { d: 'M1235 83h5l-2 3h-1z', fill: '#f00' });

// Hand-drawn remarks
line('399,353 404,350 412,346 423,344 435,340 445,337 457,336 463,334 478,334 485,332 505,332 510,335 527,338 533,341 543,347 547,348 553,347 555,346 565,344 579,340 680,340 715,341 749,342 757,344 809,344', '#fff');
line('1106,366 1121,371 1143,387 1167,399 1181,415 1186,426 1200,436 1216,436 1227,443 1242,450 1261,461 1271,465 1278,470 1286,478', '#fff');
line('1101,366 1106,366 1125,355 1137,354 1144,354 1135,357 1123,363 1107,368 1124,363 1117,363 1104,367', '#fff');
line('1104,367 1107,375 1112,390 1109,373 1108,368', '#fff', 2);
line('806,488 812,495 845,518 861,537 877,559 892,572 916,600 927,612 943,631 960,645', '#fff');
line('805,510 805,487 809,494', '#fff');
line('813,493 832,490', '#fff');
label(440, 321, 'Уровень', 'note');
label(966, 657, 'Вход', 'note');
label(1301, 490, 'Выход или перенос в', 'note');
label(1301, 508, 'б/у и трал', 'note');

// RSI pane
for (const y of [784, 789]) line(`13,${y} 1563,${y}`, '#ffa500', 1, '4 3');
line('14,776 22,774 30,776 37,783 45,778 51,781 69,781 77,787 86,783 103,785 114,781 130,779 141,781 160,781 169,785 189,801 205,803 214,805 230,802 238,795 244,797 263,797 269,793 288,793 302,795 310,802 319,803 327,801 360,802 375,799 391,794 398,791 413,783 422,776 430,772 446,772 453,769 460,772 468,773 475,777 496,778 517,781 547,784 565,780 579,786 597,791 606,790 629,790 643,785 661,788 670,792 691,793 718,793 734,787 749,787 757,800 766,800 773,803 781,794 793,793 806,782 812,778 838,778 846,771 859,770 868,767 893,766 900,771 909,771 918,775 933,775 941,779 965,779 974,777 982,782 990,776 999,776 1006,781 1016,782 1038,779 1054,776 1065,781 1078,781 1087,788 1094,789 1101,786 1110,786 1120,782 1136,782 1142,784 1150,781 1158,785 1166,780 1173,780 1181,785 1197,788 1205,785 1212,787 1221,781 1229,781 1236,790 1253,791 1285,793 1294,788 1310,790 1324,793 1340,789 1365,791 1374,798 1381,800 1388,800 1397,804 1406,800 1431,798 1438,789 1448,788 1461,793 1468,790 1482,789 1493,783 1510,779 1532,777 1540,781 1551,780 1557,789', '#9acd32', 2);
line('13,788 31,784 52,781 71,779 90,781 114,783 162,782 179,783 193,786 207,790 220,794 238,798 262,800 286,798 306,796 331,797 358,800 382,801 403,798 427,791 448,783 461,778 475,775 492,774 517,775 547,780 566,780 591,784 627,787 670,789 699,791 734,792 752,791 770,793 799,793 824,790 841,785 859,779 877,774 899,770 927,770 956,773 981,777 1020,779 1081,780 1106,782 1152,784 1173,782 1216,784 1244,785 1266,788 1294,790 1322,791 1351,790 1376,790 1397,794 1429,798 1454,797 1471,795 1486,792 1503,788 1521,786 1542,782 1557,781', '#1e90ff');
add(plot, 'path', { d: 'M13 801l5 6h-5z', fill: '#2f4f4f' });

// Frames and axes
rect(12, 82, 1552, 1, '#fff');
rect(12, 760, 1552, 1, '#fff');
rect(12, 762, 1552, 1, '#fff');
rect(12, 807, 1552, 1, '#fff');
for (const x of [12, 1563]) {
  rect(x, 82, 1, 679, '#fff');
  rect(x, 762, 1, 46, '#fff');
}
for (let k = 0; k <= 20; k++) {
  const y = Math.round(95 + k * 33.05);
  rect(1564, y, 2, 1, '#fff');
  label(1569, y + 3, (0.9009 - k * 0.00085).toFixed(5));
}
add(labels, 'rect', { x: 1565, y: 414, width: 41, height: 11, fill: '#fff' });
label(1569, 423, '0.89255', 'price dark');
label(1567, 773, '93.1209');
label(1567, 787, '55');
label(1567, 793, '45');
label(1567, 804, '12.5098');

const times = ['31 Dec 2013', '31 Dec 15:30', '31 Dec 17:30', '2 Jan 09:30', '2 Jan 11:30', '2 Jan 13:30', '2 Jan 15:30', '2 Jan 17:30', '2 Jan 19:30', '2 Jan 21:30', '2 Jan 23:30', '3 Jan 01:30', '3 Jan 03:30', '3 Jan 05:30', '3 Jan 07:30', '3 Jan 09:30', '3 Jan 11:30', '3 Jan 13:30', '3 Jan 15:30', '3 Jan 17:30', '3 Jan 19:30', '3 Jan 21:30', '3 Jan 23:30', '6 Jan 01:30', '6 Jan 03:30'];
times.forEach((time, k) => {
  rect(13 + k * 64, 808, 1, 3, '#fff');
  label(12 + k * 64, 820, time, 'time');
});

label(13, 95, '59', 'cyan');
add(labels, 'path', { d: 'M16 88h8l-4 5z', fill: '#fff' });
label(29, 94, 'AUDUSD,M15 \u00a0\u00a00.89247 \u00a00.89275 0.89231 0.89255');
label(1546, 94, 'Trade ManagerEA_fxtr51 V8.6', 'price end');
add(labels, 'path', { d: 'M1551 90l5 5M1556 90l-5 5', stroke: '#fff', 'stroke-width': 2 });
label(17, 775, 'RSI(10) 60.6430 \u00a0->MA(10) 54.2988');
label(14, 754, 'Grath 1.23', 'signature');
label(1471, 754, '03', 'clock');
label(1496, 755, 'Min', 'unit');
label(1514, 754, '01', 'clock');
label(1537, 755, 'Sec', 'unit');
```
